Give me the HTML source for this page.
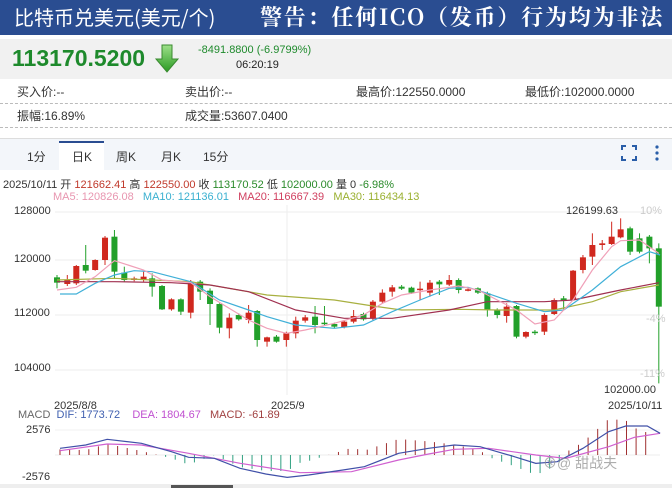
<!DOCTYPE html>
<html><head><meta charset="utf-8"><style>
*{margin:0;padding:0;box-sizing:border-box}
body{width:672px;height:488px;overflow:hidden;background:#fff;font-family:"Liberation Sans","Noto Sans CJK SC",sans-serif;position:relative;color:#333}
.a{position:absolute;white-space:nowrap}
#hd{left:0;top:0;width:672px;height:35px;background:#2a4d91}
#pr{left:0;top:39px;width:672px;height:40px;background:#f1f1f1}
.row{left:0;width:672px;height:24px;border-bottom:1px dashed #bbb;font-size:12px;line-height:24px}
#tabs{left:0;top:138px;width:672px;height:32px;background:#f3f6fa;border-top:1px solid #ddd}
.tab{font-size:12px;top:148px}
</style></head><body>
<div class="a" id="hd"></div>
<div class="a" style="left:14px;top:4px;font-size:20px;color:#fff;font-family:'Noto Sans CJK SC',sans-serif;line-height:26px">比特币兑美元(美元/个)</div>
<div class="a" style="left:260px;top:3px;font-size:22px;color:#fff;font-weight:bold;font-family:'Noto Serif CJK SC',serif;line-height:28px;letter-spacing:1.8px">警告：任何ICO（发币）行为均为非法</div>
<div class="a" id="pr"></div>
<div class="a" style="left:12px;top:45px;font-size:23px;font-weight:bold;color:#1e8a2c">113170.5200</div>
<svg class="a" style="left:154px;top:44px" width="26" height="30"><defs><linearGradient id="g" x1="0" x2="0" y1="0" y2="1"><stop offset="0" stop-color="#9ee08a"/><stop offset="1" stop-color="#2a9a22"/></linearGradient></defs><path d="M8 1h10v14h6l-11 13L2 15h6z" fill="url(#g)" stroke="#3a8a30" stroke-width="1"/></svg>
<div class="a" style="left:198px;top:44px;font-size:11px;color:#1e8a2c">-8491.8800 (-6.9799%)</div>
<div class="a" style="left:236px;top:59px;font-size:11px;color:#222">06:20:19</div>
<div class="a row" style="top:80px"><span class="a" style="left:17px">买入价:--</span><span class="a" style="left:185px">卖出价:--</span><span class="a" style="left:356px">最高价:122550.0000</span><span class="a" style="left:525px">最低价:102000.0000</span></div>
<div class="a row" style="top:104px"><span class="a" style="left:17px">振幅:16.89%</span><span class="a" style="left:185px">成交量:53607.0400</span></div>
<div class="a" id="tabs"></div>
<div class="a" style="left:59px;top:141px;width:45px;height:30px;background:#fff;border-top:2px solid #2a4d91"></div>
<div class="a tab" style="left:27px">1分</div>
<div class="a tab" style="left:72px">日K</div>
<div class="a tab" style="left:116px">周K</div>
<div class="a tab" style="left:161px">月K</div>
<div class="a tab" style="left:203px">15分</div>
<svg class="a" style="left:620px;top:144px" width="46" height="18"><path d="M2 6V2h4M12 2h4v4M16 12v4h-4M6 16H2v-4" fill="none" stroke="#2a5ea8" stroke-width="2"/><circle cx="37" cy="3" r="1.6" fill="#2a5ea8"/><circle cx="37" cy="9" r="1.6" fill="#2a5ea8"/><circle cx="37" cy="15" r="1.6" fill="#2a5ea8"/></svg>
<div class="a" style="left:3px;top:176px;font-size:11px;color:#333">2025/10/11 开 <span style="color:#c0392b">121662.41</span> 高 <span style="color:#c0392b">122550.00</span> 收 <span style="color:#2a8a2a">113170.52</span> 低 <span style="color:#2a8a2a">102000.00</span> 量 0 <span style="color:#2a8a2a">-6.98%</span></div>
<div class="a" style="left:53px;top:191px;font-size:11px"><span style="color:#e896b0">MA5: 120826.08</span>&nbsp;&nbsp; <span style="color:#3ab0d0">MA10: 121136.01</span>&nbsp;&nbsp; <span style="color:#d04060">MA20: 116667.39</span>&nbsp;&nbsp; <span style="color:#9ab030">MA30: 116434.13</span></div>
<svg class="a" id="ch" style="left:0;top:0" width="672" height="488"></svg>
<div class="a" style="left:14px;top:205px;font-size:11px">128000</div>
<div class="a" style="left:14px;top:253px;font-size:11px">120000</div>
<div class="a" style="left:14px;top:307px;font-size:11px">112000</div>
<div class="a" style="left:14px;top:362px;font-size:11px">104000</div>
<div class="a" style="left:640px;top:205px;font-size:11px;color:#ccc">10%</div>
<div class="a" style="left:646px;top:313px;font-size:11px;color:#ccc">-4%</div>
<div class="a" style="left:640px;top:368px;font-size:11px;color:#ccc">-11%</div>
<div class="a" style="left:566px;top:205px;font-size:11px">126199.63</div>
<div class="a" style="left:604px;top:384px;font-size:11px">102000.00</div>
<div class="a" style="left:54px;top:400px;font-size:11px">2025/8/8</div>
<div class="a" style="left:271px;top:400px;font-size:11px">2025/9</div>
<div class="a" style="left:608px;top:400px;font-size:11px">2025/10/11</div>
<div class="a" style="left:18px;top:409px;font-size:11px;color:#666">MACD&nbsp; <span style="color:#4060b0">DIF: 1773.72</span>&nbsp;&nbsp;&nbsp; <span style="color:#c050d0">DEA: 1804.67</span>&nbsp;&nbsp; <span style="color:#a04040">MACD: -61.89</span></div>
<div class="a" style="left:26px;top:424px;font-size:11px">2576</div>
<div class="a" style="left:22px;top:471px;font-size:11px">-2576</div>
<div class="a" style="left:543px;top:453px;font-size:14px;color:#999;opacity:.8">⊗@ 甜战夫</div>
<script>
var s=document.getElementById('ch'),h='';
var X=function(z){return z/2.333},Y=function(z){return 200+z/3};
[212,260,315,370].forEach(function(y){h+='<line x1="55" x2="660" y1="'+y+'" y2="'+y+'" stroke="#eee"/>'});
h+='<line x1="287" x2="287" y1="205" y2="395" stroke="#eee"/>';
h+='<line x1="55" x2="660" y1="455" y2="455" stroke="#eee"/><line x1="55" x2="660" y1="430" y2="430" stroke="#f2f2f2"/>';
var c=[[133,'g',232,248,225,265],[157,'r',240,252,225,258],[178,'r',198,250,195,255],[200,'g',195,212,135,220],[222,'r',180,210,178,212],[245,'r',113,180,108,195],[267,'g',110,215,90,235],[290,'g',218,240,200,245],[313,'r',235,240,230,244],[335,'r',230,238,215,245],[355,'g',235,260,220,290],[378,'g',258,328,255,330],[400,'r',298,328,295,332],[422,'g',298,335,295,345],[445,'r',248,338,240,355],[467,'g',245,275,240,300],[490,'g',272,312,265,375],[512,'g',312,383,310,400],[535,'r',353,385,340,415],[557,'g',345,358,340,362],[580,'r',338,360,315,370],[600,'g',333,420,330,440],[623,'r',412,425,410,440],[645,'g',410,425,405,428],[668,'r',400,420,395,440],[690,'r',362,400,350,415],[712,'r',352,362,345,368],[735,'g',350,375,318,400],[757,'g',368,372,318,378],[780,'g',372,380,368,384],[803,'r',365,382,360,385],[825,'r',348,365,330,370],[848,'g',342,358,338,362],[870,'r',305,355,300,360],[892,'r',278,305,268,310],[915,'r',262,275,255,290],[937,'g',260,266,255,270],[960,'g',263,278,260,282],[980,'r',266,270,245,300],[1003,'r',248,278,240,290],[1025,'g',245,253,240,285],[1048,'r',240,254,225,258],[1070,'g',240,270,235,280],[1092,'r',268,271,265,274],[1115,'g',265,278,262,282],[1137,'g',280,330,275,350],[1160,'g',330,345,325,355],[1182,'r',320,348,310,368],[1205,'g',318,410,315,415],[1227,'r',396,410,394,415],[1248,'g',395,398,390,405],[1270,'r',345,395,340,405],[1293,'r',300,342,295,345],[1315,'g',295,302,288,330],[1337,'r',212,300,210,302],[1360,'r',172,210,165,220],[1382,'r',135,170,100,195],[1405,'r',130,135,120,150],[1427,'r',110,132,65,135],[1448,'r',88,112,55,115],[1470,'g',85,155,80,165],[1492,'g',115,155,100,160],[1515,'g',110,145,105,190],[1537,'g',145,320,130,550]];
c.forEach(function(k){var x=X(k[0]),col=k[1]=='r'?'#d0281e':'#22a02a';h+='<line x1="'+x+'" x2="'+x+'" y1="'+Y(k[4])+'" y2="'+Y(k[5])+'" stroke="'+col+'"/>';h+='<rect x="'+(x-3)+'" y="'+Y(k[2])+'" width="6" height="'+Math.max(1.5,Y(k[3])-Y(k[2]))+'" fill="'+col+'"/>'});
function pl(a,col){var p=[];for(var i=0;i<a.length;i+=2)p.push(X(a[i])+','+Y(a[i+1]));h+='<polyline points="'+p.join(' ')+'" fill="none" stroke="'+col+'" stroke-width="1.2"/>'}
pl([133,240,267,235,445,245,623,285,780,300,870,318,937,330,1070,328,1160,330,1293,330,1382,305,1448,275,1537,255],'#a8b040');
pl([133,245,267,245,400,248,490,255,580,275,690,330,803,355,915,355,1048,330,1137,305,1270,305,1337,300,1448,270,1537,248],'#a03050');
pl([140,282,178,282,222,250,267,225,313,212,355,215,445,245,512,300,580,330,623,350,690,375,780,385,848,375,915,335,980,300,1048,265,1092,262,1137,280,1205,310,1270,335,1315,330,1382,270,1448,200,1515,155,1540,165],'#40b0d8');
pl([133,270,178,262,222,230,267,182,335,210,378,240,445,248,490,290,535,325,580,360,623,385,668,400,712,390,780,370,848,345,892,310,937,285,1003,270,1070,258,1115,270,1160,300,1205,330,1248,372,1293,360,1337,300,1382,210,1427,140,1448,122,1492,120,1537,160],'#f0a0b8');
var dif=[140,745,200,735,250,718,330,730,400,755,440,772,500,775,560,805,620,822,670,832,720,825,800,810,850,800,930,760,1000,745,1060,735,1120,740,1200,770,1250,790,1300,785,1360,745,1420,695,1460,678,1510,678,1540,700];
var dea=[140,752,250,732,330,735,440,760,560,790,700,818,820,815,930,780,1000,762,1060,748,1140,745,1250,765,1320,775,1420,740,1480,712,1540,700];
function it(a,x){for(var i=0;i<a.length-2;i+=2){if(x<=a[i+2]){var t=(x-a[i])/(a[i+2]-a[i]);return a[i+1]+t*(a[i+3]-a[i+1])}}return a[a.length-1]}
for(var zx=140;zx<=1520;zx+=22.4){var d=(it(dea,zx)-it(dif,zx))*2.4,x=X(zx),y0=455,y1=455-d/3*1.0;h+='<line x1="'+x+'" x2="'+x+'" y1="'+y0+'" y2="'+y1+'" stroke="'+(d>0?'#a03030':'#30a080')+'"/>'}
pl(dea,'#d060d0');pl(dif,'#4050a8');
h+='<rect x="0" y="484" width="672" height="4" fill="#eee"/><rect x="171" y="485" width="62" height="3" fill="#555"/>';
s.innerHTML=h;
</script>
</body></html>
